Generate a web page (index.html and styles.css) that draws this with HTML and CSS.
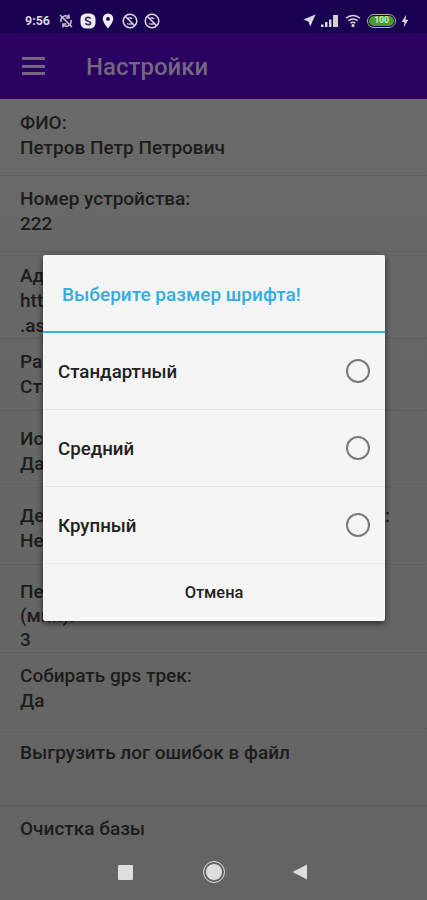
FILE: index.html
```html
<!DOCTYPE html>
<html lang="ru">
<head>
<meta charset="utf-8">
<title>Настройки</title>
<link rel="stylesheet" href="styles.css">
</head>
<body>
<div class="screen">
  <header class="statusbar">
    <div class="status-left">
      <span class="time">9:56</span>
      <svg class="ic" width="16" height="16" viewBox="0 0 16 16" fill="none" stroke="#c9c6d2" stroke-width="1.5"><path d="M3 9a5 5 0 0 1 8-5M13 7a5 5 0 0 1-8 5"/><path d="M11 1.5V5H7.5M5 14.5V11h3.5"/><path d="M2 2l12 12"/></svg>
      <svg class="ic" width="16" height="16" viewBox="0 0 16 16"><rect x="0.5" y="0.5" width="15" height="15" rx="5.5" fill="#f0eef4"/><path d="M10.6 5.6C10 4.7 9 4.4 8 4.4c-1.500 0-2.500.8-2.500 1.900 0 2.600 5.100 1.300 5.100 3.700 0 1-1.100 1.700-2.500 1.700-1.200 0-2.200-.5-2.800-1.400" fill="none" stroke="#3a2a60" stroke-width="1.700"/></svg>
      <svg class="ic" width="12" height="16" viewBox="0 0 12 16"><path fill-rule="evenodd" d="M6 0.500a5.300 5.300 0 0 0-5.300 5.300C.7 9.500 6 15.500 6 15.500s5.300-6 5.300-9.700A5.300 5.300 0 0 0 6 .5zm0 3.500a1.900 1.900 0 1 1 0 3.800 1.900 1.900 0 0 1 0-3.800z" fill="#eeecf2"/></svg>
      <svg class="ic gap-l" width="16" height="16" viewBox="0 0 16 16" fill="none" stroke="#dcdae2"><circle cx="8" cy="8" r="6.800" stroke-width="1.500"/><path d="M3.500 3.500l9 9" stroke-width="1.500"/><path d="M5 10.500c1.500 1 5 1 5.500-.5M6 5.500c1.500-1 3.500-.5 4 .5" stroke-width="1.300"/></svg>
      <svg class="ic" width="16" height="16" viewBox="0 0 16 16" fill="none" stroke="#dcdae2"><circle cx="8" cy="8" r="6.800" stroke-width="1.500"/><path d="M3.500 3.500l9 9" stroke-width="1.500"/><path d="M5 10.500c1.500 1 5 1 5.500-.5M6 5.500c1.500-1 3.500-.5 4 .5" stroke-width="1.300"/></svg>
    </div>
    <div class="status-right">
      <svg class="ic" width="13" height="13" viewBox="0 0 14 14"><path d="M13.500.5L.5 6l5.300 2 2 5.500z" fill="#d9d7df"/></svg>
      <svg class="ic sig" width="18" height="13" viewBox="0 0 18 13" fill="#d4d2da"><rect x="0" y="10.500" width="2.500" height="2.500"/><rect x="4" y="8" width="2.500" height="5"/><rect x="8" y="5.500" width="2.500" height="7.500"/><rect x="12" y="1" width="5" height="12"/></svg>
      <svg class="ic" width="16" height="13" viewBox="0 0 16 13" fill="none" stroke="#d9d7df" stroke-width="1.400"><path d="M1 4.200c4-3.600 10-3.600 14 0M3.300 6.800c2.700-2.400 6.700-2.400 9.400 0M5.600 9.200c1.400-1.200 3.400-1.200 4.800 0"/><circle cx="8" cy="11.500" r=".9" fill="#d9d7df"/></svg>
      <span class="battery"><span class="battery-fill">100</span></span>
      <svg class="ic bolt" width="8" height="14" viewBox="0 0 8 14"><path d="M5.200.5L.8 8h2.700L2.700 13.500 7.300 5.800H4.500z" fill="#d9d7df"/></svg>
    </div>
  </header>
  <div class="toolbar">
    <div class="burger"><i></i><i></i><i></i></div>
    <h1 class="toolbar-title">Настройки</h1>
  </div>
  <main class="list">
    <div class="row">ФИО:<br>Петров Петр Петрович</div>
    <div class="row">Номер устройства:<br>222</div>
    <div class="row">Адрес сервера:<br>http://server.local/service/mobile<br>.asmx</div>
    <div class="row row-short">Размер шрифта:<br>Стандартный</div>
    <div class="row row-loose">Использовать gps:<br>Да</div>
    <div class="row row-loose">Детализировать отчёт по всем заявкам :<br>Нет</div>
    <div class="row row-loose row-tight">Период отправки координат<br>(мин):<br>3</div>
    <div class="row">Собирать gps трек:<br>Да</div>
    <div class="row">Выгрузить лог ошибок в файл</div>
    <div class="row">Очистка базы</div>
  </main>
  <nav class="navbar">
    <span class="nav-square"></span>
    <span class="nav-home"></span>
    <svg width="16" height="16" viewBox="0 0 16 16"><path d="M15 .5v15L.5 8z" fill="#dedede"/></svg>
  </nav>
  <section class="dialog">
    <h2 class="dialog-title">Выберите размер шрифта!</h2>
    <div class="option"><span class="option-label">Стандартный</span><i class="radio"></i></div>
    <div class="option"><span class="option-label">Средний</span><i class="radio"></i></div>
    <div class="option"><span class="option-label">Крупный</span><i class="radio"></i></div>
    <div class="cancel">Отмена</div>
  </section>
</div>
</body>
</html>
```
FILE: styles.css
```css
* { box-sizing: border-box; }
html, body { margin: 0; padding: 0; }
body { font-family: Roboto, "Noto Sans", sans-serif; background: #666; }
.screen {
  position: relative;
  width: 427px;
  height: 900px;
  overflow: hidden;
  display: flex;
  flex-direction: column;
  background: linear-gradient(#6c6c6c, #676767 30%, #646464);
}
.statusbar {
  height: 33px;
  flex: none;
  background: #1a0050;
  display: flex;
  justify-content: space-between;
  align-items: center;
  padding: 8px 18px 0 25px;
  color: #d8d6de;
}
.status-left, .status-right { display: flex; align-items: center; gap: 6px; }
.status-right { gap: 5px; }
.time { font-size: 12.5px; font-weight: 700; margin-right: 2px; }
.ic { display: block; flex: none; }
.gap-l { margin-left: 2px; }
.sig { margin-right: 1px; }
.battery {
  width: 29px;
  height: 14px;
  margin-left: 1px;
  border: 1.500px solid #a9b39f;
  border-radius: 7px;
  padding: 1px;
  display: block;
}
.battery-fill {
  display: block;
  height: 100%;
  background: #4c9a2a;
  border-radius: 5px;
  color: #d8e8cc;
  font-size: 8.500px;
  font-weight: 700;
  line-height: 9px;
  text-align: center;
}
.toolbar {
  height: 66px;
  flex: none;
  background: #2a0060;
  display: flex;
  align-items: center;
  padding: 1px 0 0 22px;
}
.burger {
  width: 23px;
  height: 18px;
  display: flex;
  flex-direction: column;
  justify-content: space-between;
  margin: -1px 41px 0 0;
}
.burger i { display: block; height: 3px; background: #71677f; }
.toolbar-title {
  margin: 0;
  font-size: 24px;
  font-weight: 500;
  color: #71677f;
}
.list {
  flex: 1;
  min-height: 0;
  overflow: hidden;
}
.row {
  min-height: 76.500px;
  padding: 10.500px 20px 0;
  font-size: 19px;
  font-weight: 500;
  line-height: 25px;
  color: #1c1c1c;
  border-bottom: 1px solid #5e5e5e;
}
.row-short { min-height: 72px; }
.row-loose { padding-top: 15px; min-height: 77px; }
.row-tight { line-height: 24px; }
.navbar {
  position: absolute;
  left: 0;
  right: 0;
  bottom: 0;
  height: 56px;
  display: flex;
  align-items: center;
  padding-left: 118px;
  background: #646464;
}
.nav-square {
  width: 15px;
  height: 15px;
  background: #dedede;
  border-radius: 1px;
  margin-right: 70px;
}
.nav-home {
  width: 22px;
  height: 22px;
  border-radius: 50%;
  border: 1.500px solid #dedede;
  padding: 2px;
  background: #dedede content-box;
  margin-right: 67px;
}
.dialog {
  position: absolute;
  left: 43px;
  top: 255px;
  width: 342px;
  height: 366px;
  background: #f5f5f5;
  border-radius: 2px;
  box-shadow: 0 2px 6px rgba(0, 0, 0, 0.6);
  display: flex;
  flex-direction: column;
}
.dialog-title {
  margin: 0;
  height: 78px;
  padding: 2px 19px 0;
  flex: none;
  display: flex;
  align-items: center;
  border-bottom: 2px solid #33b5e5;
  font-size: 19px;
  font-weight: 500;
  color: #33aee0;
}
.option {
  height: 77px;
  flex: none;
  display: flex;
  align-items: center;
  justify-content: space-between;
  padding: 0 15px;
  font-size: 18.700px;
  font-weight: 500;
  color: #222;
  border-bottom: 1px solid #e8e8e8;
}
.option-label { padding-top: 1px; }
.radio {
  display: block;
  width: 24px;
  height: 24px;
  border: 2px solid #7a7a7a;
  border-radius: 50%;
}
.cancel {
  flex: 1;
  display: flex;
  align-items: center;
  justify-content: center;
  font-size: 16.400px;
  font-weight: 500;
  color: #222;
}
```
